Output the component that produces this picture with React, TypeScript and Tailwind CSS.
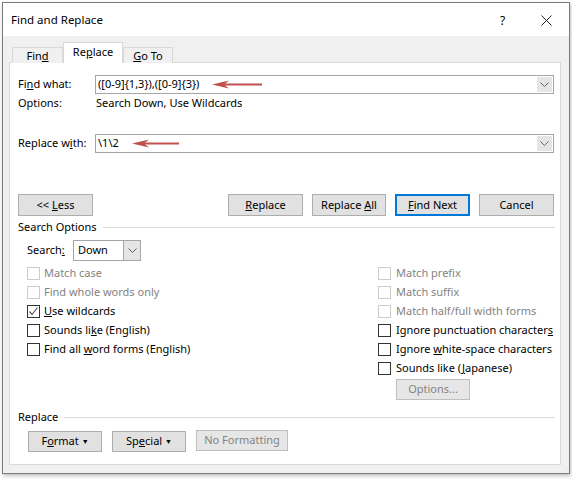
import React from 'react';

// 下矢印（コンボボックス用）
const Chevron = () => (
  <svg width="9" height="5" viewBox="0 0 9 5">
    <path d="M0.5 0.5 L4.5 4.5 L8.5 0.5" fill="none" stroke="#606060" strokeWidth="1" />
  </svg>
);

// 赤い注釈矢印
const RedArrow = ({ width }: { width: number }) => (
  <svg width={width} height="9" viewBox={`0 0 ${width} 9`}>
    <path d="M0 4.5 L17 0.5 L12 4.5 L17 8.5 Z" fill="#c0504d" />
    <line x1="11" y1="4.5" x2={width} y2="4.5" stroke="#c0504d" strokeWidth="2" />
  </svg>
);

const ComboBox = ({ value, arrow }: { value: string; arrow: React.ReactNode }) => (
  <div className="w-[459px] h-[19px] border border-[#a6a6a6] bg-white flex">
    <div className="flex-1 flex items-center pl-[2px] gap-[13px] text-black">
      <span>{value}</span>
      {arrow}
    </div>
    <div className="w-[17px] h-full bg-[#e5e5e5] border border-white flex items-center justify-center">
      <Chevron />
    </div>
  </div>
);

interface BtnProps {
  children: React.ReactNode;
  className?: string;
  disabled?: boolean;
  focused?: boolean;
}

const Btn: React.FC<BtnProps> = ({ children, className = '', disabled, focused }) => (
  <div
    className={`flex items-center justify-center bg-[#e1e1e1] ${
      focused ? 'border-2 border-[#0078d7]' : disabled ? 'border border-[#bfbfbf] bg-[#e6e6e6]' : 'border border-[#adadad]'
    } ${disabled ? 'text-[#838383]' : 'text-black'} ${className}`}
  >
    <span>{children}</span>
  </div>
);

const CheckBox = ({
  label,
  checked,
  disabled,
  gap = 'gap-[4px]',
}: {
  label: React.ReactNode;
  checked?: boolean;
  disabled?: boolean;
  gap?: string;
}) => (
  <div className={`h-[19px] flex items-center ${gap}`}>
    <div
      className={`w-[13px] h-[13px] border bg-white flex items-center justify-center ${
        disabled ? 'border-[#cccccc]' : 'border-[#333333]'
      }`}
    >
      {checked && (
        <svg width="11" height="11" viewBox="0 0 11 11">
          <path d="M1.5 5.5 L4 8.5 L9.5 1.5" fill="none" stroke="#5c5c5c" strokeWidth="1.2" />
        </svg>
      )}
    </div>
    <span className={disabled ? 'text-[#838383]' : 'text-black'}>{label}</span>
  </div>
);

const SectionLabel = ({ label }: { label: string }) => (
  <div className="h-[14px] flex items-center gap-[6px] pl-[8px] pr-[5px]">
    <span>{label}</span>
    <div className="flex-1 h-px bg-[#dcdcdc]" />
  </div>
);

export default function App() {
  return (
    <div className="w-[572px] h-[479px] bg-white pt-[2px] pl-[2px] font-['Noto_Sans',sans-serif] text-[11px] text-black">
      <div className="w-[568px] h-[472px] border border-[#7a7a7a] flex flex-col shadow-[1px_2px_4px_rgba(0,0,0,0.25)]">
        {/* タイトルバー */}
        <div className="h-[33px] bg-white flex items-center pl-[8px] pt-[1px] relative shrink-0">
          <span className="text-[11.5px]">Find and Replace</span>
          <span className="absolute left-[497px] top-[9px] text-[12px]">?</span>
          <svg className="absolute left-[538px] top-[12px]" width="11" height="11" viewBox="0 0 11 11">
            <path d="M0.5 0.5 L10.5 10.5 M10.5 0.5 L0.5 10.5" stroke="#222" strokeWidth="1" />
          </svg>
        </div>

        {/* 本体 */}
        <div className="flex-1 bg-[#f0f0f0] pl-[6px] pr-[8px] pt-[7px] flex flex-col">
          {/* タブ */}
          <div className="flex items-end pl-[3px] h-[20px] -mb-px relative z-10">
            <div className="w-[51px] h-[16px] border border-b-0 border-[#d9d9d9] bg-[#f0f0f0] flex items-center justify-center pt-[1px]">
              <span>
                Fin<u>d</u>
              </span>
            </div>
            <div className="w-[60px] h-[21px] border border-b-0 border-[#d9d9d9] bg-white flex items-start justify-center pt-[1px]">
              <span>
                Re<u>p</u>lace
              </span>
            </div>
            <div className="w-[50px] h-[16px] border border-b-0 border-[#d9d9d9] bg-[#f0f0f0] flex items-center justify-center pt-[1px]">
              <span>
                <u>G</u>o To
              </span>
            </div>
          </div>

          {/* パネル */}
          <div className="h-[403px] border border-[#d9d9d9] bg-white flex flex-col">
            {/* 検索する文字列 */}
            <div className="mt-[12px] h-[19px] flex items-center pl-[8px]">
              <span className="w-[77px]">
                Fi<u>n</u>d what:
              </span>
              <ComboBox value="([0-9]{1,3}),([0-9]{3})" arrow={<RedArrow width={50} />} />
            </div>
            <div className="h-[19px] flex items-center pl-[8px]">
              <span className="w-[78px]">Options:</span>
              <span>Search Down, Use Wildcards</span>
            </div>

            {/* 置換後の文字列 */}
            <div className="mt-[21px] h-[19px] flex items-center pl-[8px]">
              <span className="w-[77px]">
                Replace w<u>i</u>th:
              </span>
              <ComboBox value="\1\2" arrow={<RedArrow width={47} />} />
            </div>

            {/* ボタン行 */}
            <div className="mt-[41px] h-[22px] flex pl-[8px] pr-[6px]">
              <Btn className="w-[75px]">
                &lt;&lt; <u>L</u>ess
              </Btn>
              <div className="ml-auto flex gap-[9px]">
                <Btn className="w-[75px]">
                  <u>R</u>eplace
                </Btn>
                <Btn className="w-[74px]">
                  Replace <u>A</u>ll
                </Btn>
                <Btn className="w-[75px]" focused>
                  <u>F</u>ind Next
                </Btn>
                <Btn className="w-[75px]">Cancel</Btn>
              </div>
            </div>

            {/* 検索オプション */}
            <div className="mt-[4px]">
              <SectionLabel label="Search Options" />
            </div>
            <div className="mt-[6px] h-[21px] flex items-center pl-[17px]">
              <span className="w-[46px]">
                Search<u>:</u>
              </span>
              <div className="w-[68px] h-[21px] border border-[#a6a6a6] bg-white flex">
                <div className="flex-1 flex items-center pl-[4px]">Down</div>
                <div className="w-[17px] bg-[#e5e5e5] border-l border-[#a6a6a6] flex items-center justify-center">
                  <Chevron />
                </div>
              </div>
            </div>

            <div className="mt-[3px] flex pl-[17px]">
              <div className="w-[351px] flex flex-col">
                <CheckBox label="Match case" disabled />
                <CheckBox label="Find whole words only" disabled />
                <CheckBox
                  label={
                    <>
                      <u>U</u>se wildcards
                    </>
                  }
                  checked
                />
                <CheckBox
                  label={
                    <>
                      Sounds li<u>k</u>e (English)
                    </>
                  }
                />
                <CheckBox
                  label={
                    <>
                      Find all <u>w</u>ord forms (English)
                    </>
                  }
                />
              </div>
              <div className="flex flex-col">
                <CheckBox label="Match prefix" disabled gap="gap-[5px]" />
                <CheckBox label="Match suffix" disabled gap="gap-[5px]" />
                <CheckBox label="Match half/full width forms" disabled gap="gap-[5px]" />
                <CheckBox
                  gap="gap-[5px]"
                  label={
                    <>
                      Ignore punctuation character<u>s</u>
                    </>
                  }
                />
                <CheckBox
                  gap="gap-[5px]"
                  label={
                    <>
                      Ignore <u>w</u>hite-space characters
                    </>
                  }
                />
                <CheckBox
                  gap="gap-[5px]"
                  label={
                    <>
                      Sounds like (<u>J</u>apanese)
                    </>
                  }
                />
                <div className="mt-[1px] pl-[18px]">
                  <Btn className="w-[74px] h-[21px]" disabled>
                    Options...
                  </Btn>
                </div>
              </div>
            </div>

            {/* 置換 */}
            <div className="mt-[10px]">
              <SectionLabel label="Replace" />
            </div>
            <div className="mt-[7px] flex items-start gap-[10px] pl-[18px]">
              <Btn className="w-[74px] h-[21px]">
                F<u>o</u>rmat <span className="text-[7px] align-middle">▼</span>
              </Btn>
              <Btn className="w-[74px] h-[21px]">
                Sp<u>e</u>cial <span className="text-[7px] align-middle">▼</span>
              </Btn>
              <Btn className="w-[92px] h-[21px] -mt-[1px]" disabled>
                No Formatting
              </Btn>
            </div>
          </div>
        </div>
      </div>
    </div>
  );
}
